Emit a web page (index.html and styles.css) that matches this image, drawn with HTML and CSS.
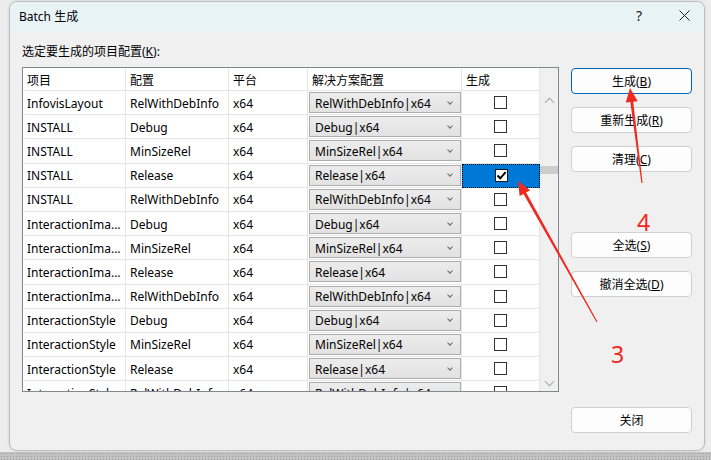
FILE: index.html
```html
<!DOCTYPE html>
<html lang="zh-CN">
<head>
  <meta charset="UTF-8">
  <title>Batch 生成</title>
  <link rel="stylesheet" href="styles.css">
</head>
<body>
  <div class="dialog">
    <div class="titlebar">
      <span class="title">Batch 生成</span>
      <span class="help">?</span>
      <svg class="close" width="11" height="11" viewBox="0 0 11 11"><path d="M0.5 0.5L10.5 10.5M10.5 0.5L0.5 10.5"/></svg>
    </div>

    <div class="dialog-body">
      <div class="main">
        <div class="caption">选定要生成的项目配置(<u>K</u>):</div>
        <div class="grid-frame">
          <div class="grid">
            <div class="row head">
              <div class="cell">项目</div>
              <div class="cell">配置</div>
              <div class="cell">平台</div>
              <div class="cell">解决方案配置</div>
              <div class="cell">生成</div>
            </div>
            <div class="row">
              <div class="cell">InfovisLayout</div>
              <div class="cell">RelWithDebInfo</div>
              <div class="cell">x64</div>
              <div class="cell combo-cell"><div class="combo">RelWithDebInfo|x64</div></div>
              <div class="cell check-cell"><span class="box"></span></div>
            </div>
            <div class="row">
              <div class="cell">INSTALL</div>
              <div class="cell">Debug</div>
              <div class="cell">x64</div>
              <div class="cell combo-cell"><div class="combo">Debug|x64</div></div>
              <div class="cell check-cell"><span class="box"></span></div>
            </div>
            <div class="row">
              <div class="cell">INSTALL</div>
              <div class="cell">MinSizeRel</div>
              <div class="cell">x64</div>
              <div class="cell combo-cell"><div class="combo">MinSizeRel|x64</div></div>
              <div class="cell check-cell"><span class="box"></span></div>
            </div>
            <div class="row">
              <div class="cell">INSTALL</div>
              <div class="cell">Release</div>
              <div class="cell">x64</div>
              <div class="cell combo-cell"><div class="combo">Release|x64</div></div>
              <div class="cell check-cell selected">
                <span class="box checked"><svg width="11" height="11" viewBox="0 0 11 11"><path d="M1.5 5.5L4.3 8.3L9.6 2.2"/></svg></span>
              </div>
            </div>
            <div class="row">
              <div class="cell">INSTALL</div>
              <div class="cell">RelWithDebInfo</div>
              <div class="cell">x64</div>
              <div class="cell combo-cell"><div class="combo">RelWithDebInfo|x64</div></div>
              <div class="cell check-cell"><span class="box"></span></div>
            </div>
            <div class="row">
              <div class="cell">InteractionIma...</div>
              <div class="cell">Debug</div>
              <div class="cell">x64</div>
              <div class="cell combo-cell"><div class="combo">Debug|x64</div></div>
              <div class="cell check-cell"><span class="box"></span></div>
            </div>
            <div class="row">
              <div class="cell">InteractionIma...</div>
              <div class="cell">MinSizeRel</div>
              <div class="cell">x64</div>
              <div class="cell combo-cell"><div class="combo">MinSizeRel|x64</div></div>
              <div class="cell check-cell"><span class="box"></span></div>
            </div>
            <div class="row">
              <div class="cell">InteractionIma...</div>
              <div class="cell">Release</div>
              <div class="cell">x64</div>
              <div class="cell combo-cell"><div class="combo">Release|x64</div></div>
              <div class="cell check-cell"><span class="box"></span></div>
            </div>
            <div class="row">
              <div class="cell">InteractionIma...</div>
              <div class="cell">RelWithDebInfo</div>
              <div class="cell">x64</div>
              <div class="cell combo-cell"><div class="combo">RelWithDebInfo|x64</div></div>
              <div class="cell check-cell"><span class="box"></span></div>
            </div>
            <div class="row">
              <div class="cell">InteractionStyle</div>
              <div class="cell">Debug</div>
              <div class="cell">x64</div>
              <div class="cell combo-cell"><div class="combo">Debug|x64</div></div>
              <div class="cell check-cell"><span class="box"></span></div>
            </div>
            <div class="row">
              <div class="cell">InteractionStyle</div>
              <div class="cell">MinSizeRel</div>
              <div class="cell">x64</div>
              <div class="cell combo-cell"><div class="combo">MinSizeRel|x64</div></div>
              <div class="cell check-cell"><span class="box"></span></div>
            </div>
            <div class="row">
              <div class="cell">InteractionStyle</div>
              <div class="cell">Release</div>
              <div class="cell">x64</div>
              <div class="cell combo-cell"><div class="combo">Release|x64</div></div>
              <div class="cell check-cell"><span class="box"></span></div>
            </div>
            <div class="row">
              <div class="cell">InteractionStyle</div>
              <div class="cell">RelWithDebInfo</div>
              <div class="cell">x64</div>
              <div class="cell combo-cell"><div class="combo">RelWithDebInfo|x64</div></div>
              <div class="cell check-cell"><span class="box"></span></div>
            </div>
          </div>
          <div class="vscroll">
            <div class="arrow up"></div>
            <div class="thumb"></div>
            <div class="arrow down"></div>
          </div>
        </div>
      </div>

      <div class="side">
        <button class="btn default">生成(<u>B</u>)</button>
        <button class="btn">重新生成(<u>R</u>)</button>
        <button class="btn">清理(<u>C</u>)</button>
        <button class="btn group">全选(<u>S</u>)</button>
        <button class="btn">撤消全选(<u>D</u>)</button>
        <button class="btn close-btn">关闭</button>
      </div>
    </div>
  </div>
  <div class="taskbar"></div>

  <!-- red annotations drawn on top of the screenshot -->
  <svg class="marks" width="711" height="460" viewBox="0 0 711 460">
    <polygon points="630,88 637.7,101.2 633.2,101.7 642.6,183 641.4,183.1 630.3,102.1 625.8,102.6"/>
    <polygon points="518,181 530,190.3 526.1,192.5 597.5,321.7 596.5,322.3 523.5,193.9 519.6,196.1"/>
  </svg>
  <div class="mark-num four">4</div>
  <div class="mark-num three">3</div>
</body>
</html>
```

FILE: styles.css
```css
:root {
  --face: #f0f0f0;
  --line: #e6e6e6;
  --frame: #828790;
  --accent: #0067c0;
  --select: #0078d7;
  --red: #f0281e;
}
body {
  margin: 0;
  width: 711px;
  height: 460px;
  overflow: hidden;
  position: relative;
  background: #ececec;
  font-family: "Noto Sans", "Noto Sans CJK SC", sans-serif;
  font-size: 12px;
  color: #000;
}
.dialog {
  box-sizing: border-box;
  width: 696px;
  height: 450px;
  margin: 1px 0 0 9px;
  background: var(--face);
  border: 1px solid #bdbdbd;
  border-radius: 8px;
  box-shadow: 0 0 3px rgba(0, 0, 0, 0.12);
  overflow: hidden;
}
.titlebar {
  height: 29px;
  display: flex;
  align-items: center;
  padding: 0 0 2px 9px;
  box-sizing: border-box;
  background: #e8f3f6;
}
.title { font-size: 12px; }
.help {
  margin-left: auto;
  font-size: 14px;
  color: #222;
}
.close {
  margin: 0 14px 0 37px;
  stroke: #222;
  stroke-width: 1;
  fill: none;
}
.dialog-body {
  display: flex;
  padding: 13px 12px 0 12px;
}
.caption {
  line-height: 16px;
  height: 16px;
}
.grid-frame {
  margin-top: 7px;
  width: 537px;
  height: 325px;
  box-sizing: border-box;
  border: 1px solid var(--frame);
  display: flex;
  background: #fff;
}
.grid {
  width: 517px;
  height: 323px;
  overflow: hidden;
}
.row {
  display: grid;
  grid-template-columns: 103px 103px 79px 154px 78px;
  height: 24.2px;
}
.row.head { height: 23px; }
.cell {
  display: flex;
  align-items: center;
  padding: 1px 0 0 4px;
  border-right: 1px solid var(--line);
  border-bottom: 1px solid var(--line);
  white-space: nowrap;
  overflow: hidden;
  box-sizing: border-box;
}
.combo-cell { padding: 0; }
.combo {
  box-sizing: border-box;
  width: 152px;
  height: 21px;
  margin-left: 1px;
  padding: 1px 8px 0 5px;
  display: flex;
  align-items: center;
  justify-content: space-between;
  border: 1px solid #adadad;
  background: linear-gradient(#ececec, #e2e2e2);
}
.combo::after {
  content: "";
  width: 3px;
  height: 3px;
  border-right: 1px solid #666;
  border-bottom: 1px solid #666;
  transform: rotate(45deg);
  margin-top: -3px;
}
.check-cell {
  justify-content: center;
  padding: 0;
}
.check-cell.selected {
  background: var(--select);
  border: 1px dotted #000;
}
.box {
  box-sizing: border-box;
  width: 13px;
  height: 13px;
  border: 1px solid #333;
  background: #fff;
  display: flex;
  align-items: center;
  justify-content: center;
}
.box.checked { border-color: #1a1a1a; }
.box svg {
  fill: none;
  stroke: #000;
  stroke-width: 2;
}
.vscroll {
  width: 18px;
  height: 323px;
  background: var(--face);
  display: flex;
  flex-direction: column;
}
.arrow {
  height: 16px;
  display: flex;
  align-items: center;
  justify-content: center;
}
.arrow::before {
  content: "";
  width: 6px;
  height: 6px;
  border-left: 1px solid #a6a6a6;
  border-top: 1px solid #a6a6a6;
}
.arrow.up { margin-top: 24px; }
.arrow.up::before { transform: rotate(45deg); margin-top: 4px; }
.arrow.down { margin-top: auto; }
.arrow.down::before { transform: rotate(-135deg); margin-top: -4px; }
.thumb {
  margin-top: 58px;
  height: 8px;
  background: #cdcdcd;
}
.side {
  width: 121px;
  margin-left: 12px;
  padding-top: 24px;
  display: flex;
  flex-direction: column;
}
.btn {
  box-sizing: border-box;
  height: 26px;
  margin-top: 13px;
  padding: 0;
  font-family: inherit;
  font-size: 12px;
  color: #000;
  background: #fdfdfd;
  border: 1px solid #d0d0d0;
  border-radius: 4px;
}
.btn:first-child { margin-top: 0; }
.btn.default { border-color: var(--accent); }
.btn.group { margin-top: 60px; }
.btn.close-btn { margin-top: 110px; }
.taskbar {
  margin-top: 1px;
  height: 8px;
  background-color: #c2c2c2;
  background-image: radial-gradient(circle, #9c9c9c 0.7px, transparent 0.9px);
  background-size: 3px 3px;
}
.marks {
  position: absolute;
  left: 0;
  top: 0;
  fill: var(--red);
  pointer-events: none;
}
.mark-num {
  position: absolute;
  font-size: 23px;
  line-height: 1;
  color: var(--red);
}
.mark-num.four { left: 637px; top: 211px; }
.mark-num.three { left: 611px; top: 343px; }
```
